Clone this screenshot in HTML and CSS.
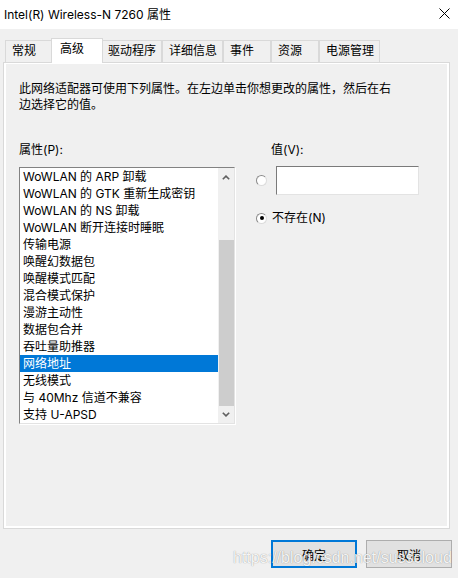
FILE: index.html
```html
<!DOCTYPE html>
<html lang="zh">
<head>
<meta charset="utf-8">
<title>Intel(R) Wireless-N 7260 属性</title>
<link rel="stylesheet" href="styles.css">
</head>
<body>
<div class="window">
  <header class="titlebar">
    <span class="title">Intel(R) Wireless-N 7260 属性</span>
    <svg class="close" width="11" height="11" viewBox="0 0 11 11"><path d="M0.5 0.5 L10.5 10.5 M10.5 0.5 L0.5 10.5" stroke="#000" stroke-width="1" fill="none"/></svg>
  </header>
  <nav class="tabs">
    <div class="tab">常规</div>
    <div class="tab active">高级</div>
    <div class="tab">驱动程序</div>
    <div class="tab">详细信息</div>
    <div class="tab">事件</div>
    <div class="tab">资源</div>
    <div class="tab">电源管理</div>
  </nav>
  <section class="panel">
    <p class="desc">此网络适配器可使用下列属性。在左边单击你想更改的属性，然后在右边选择它的值。</p>
    <div class="columns">
      <div class="col-left">
        <div class="label">属性(P):</div>
        <div class="listbox">
          <ul class="items">
            <li>WoWLAN 的 ARP 卸载</li>
            <li>WoWLAN 的 GTK 重新生成密钥</li>
            <li>WoWLAN 的 NS 卸载</li>
            <li>WoWLAN 断开连接时睡眠</li>
            <li>传输电源</li>
            <li>唤醒幻数据包</li>
            <li>唤醒模式匹配</li>
            <li>混合模式保护</li>
            <li>漫游主动性</li>
            <li>数据包合并</li>
            <li>吞吐量助推器</li>
            <li class="selected">网络地址</li>
            <li>无线模式</li>
            <li>与 40Mhz 信道不兼容</li>
            <li>支持 U-APSD</li>
          </ul>
          <div class="scrollbar">
            <div class="sb-btn sb-up"><svg width="8" height="5" viewBox="0 0 8 5"><path d="M0.8 4.3 L4 1.1 L7.2 4.3" stroke="#606060" stroke-width="1.6" fill="none"/></svg></div>
            <div class="sb-track"><div class="sb-thumb"></div></div>
            <div class="sb-btn sb-down"><svg width="8" height="5" viewBox="0 0 8 5"><path d="M0.8 0.7 L4 3.9 L7.2 0.7" stroke="#606060" stroke-width="1.6" fill="none"/></svg></div>
          </div>
        </div>
      </div>
      <div class="col-right">
        <div class="label value-label">值(V):</div>
        <div class="radio-row row-input">
          <span class="radio"></span>
          <div class="textbox"></div>
        </div>
        <div class="radio-row row-none">
          <span class="radio checked"></span>
          <span class="radio-text">不存在(N)</span>
        </div>
      </div>
    </div>
  </section>
  <div class="buttons">
    <button class="btn default">确定</button>
    <button class="btn">取消</button>
  </div>
  <div class="watermark">https://blog.csdn.net/susscloud</div>
</div>
</body>
</html>
```
FILE: styles.css
```css
* { box-sizing: border-box; }

html, body {
  margin: 0;
  padding: 0;
  background: #f0f0f0;
}

body {
  width: 458px;
  height: 578px;
  overflow: hidden;
  font-family: Inter, "Noto Sans CJK SC", sans-serif;
  font-size: 12px;
  color: #000;
}

.window {
  position: relative;
  width: 458px;
  height: 578px;
}

.titlebar {
  height: 29px;
  background: #fff;
  display: flex;
  align-items: center;
  justify-content: space-between;
  padding: 0 8px 0 4px;
}

.title {
  line-height: 17px;
  margin-top: -1px;
}

.close {
  display: block;
  margin-bottom: 2px;
}

.tabs {
  display: flex;
  align-items: flex-end;
  height: 25px;
  margin-top: 9px;
  margin-bottom: -1px;
  padding-left: 5px;
  position: relative;
  z-index: 1;
}

.tab {
  min-width: 48px;
  height: 22px;
  margin-bottom: 1px;
  padding: 0 5px 0 6px;
  border: 1px solid #d9d9d9;
  border-bottom: none;
  background: #f0f0f0;
  line-height: 20px;
  white-space: nowrap;
}

.tab.active {
  min-width: 52px;
  height: 25px;
  margin: 0 -2px;
  padding: 1px 5px 0 8px;
  background: #fff;
  line-height: 17px;
  position: relative;
}

.panel {
  margin: 0 8px 0 3px;
  height: 467px;
  border: 1px solid #d9d9d9;
  box-shadow: inset 2px 1px 0 #fff, inset -2px -2px 0 #fff;
  padding: 18px 15px 0 15px;
}

.desc {
  margin: 0;
  width: 376px;
  line-height: 16px;
}

.columns {
  display: grid;
  grid-template-columns: 216px auto;
  column-gap: 21px;
  margin-top: 29px;
}

.label {
  line-height: 16px;
}

.value-label {
  margin-left: 15px;
}

.listbox {
  margin-top: 9px;
  width: 216px;
  height: 257px;
  display: flex;
  background: #fff;
  border: 1px solid;
  border-color: #828282 #e3e3e3 #e3e3e3 #828282;
  box-shadow: 1px 1px 0 #fff;
  overflow: hidden;
}

.items {
  list-style: none;
  margin: 0;
  padding: 0;
  flex: 1;
  overflow: hidden;
}

.items li {
  height: 17px;
  line-height: 17px;
  padding-left: 3px;
  white-space: nowrap;
}

.items li.selected {
  background: #0078d7;
  color: #fff;
}

.scrollbar {
  width: 16px;
  background: #f0f0f0;
  display: flex;
  flex-direction: column;
}

.sb-btn {
  display: flex;
  align-items: center;
  justify-content: center;
}

.sb-btn svg { display: block; }

.sb-up { height: 17px; padding-top: 1px; }
.sb-down { height: 16px; padding-bottom: 1px; }

.sb-track {
  flex: 1;
}

.sb-thumb {
  margin: 55px 0 0 1px;
  height: 166px;
  background: #cdcdcd;
}

.radio-row {
  display: flex;
  align-items: center;
}

.row-input {
  margin-top: 8px;
  height: 29px;
}

.row-none {
  margin-top: 15px;
  height: 16px;
}

.radio {
  position: relative;
  width: 11px;
  height: 11px;
  flex: none;
  border-radius: 50%;
  background: #fff;
  border: 1px solid;
  border-color: #8a8a8a #dcdcdc #dcdcdc #8a8a8a;
}

.radio.checked::after {
  content: "";
  position: absolute;
  left: 2.5px;
  top: 2.5px;
  width: 4px;
  height: 4px;
  border-radius: 50%;
  background: #000;
}

.textbox {
  margin-left: 9px;
  width: 143px;
  height: 29px;
  background: #fff;
  border: 1px solid;
  border-color: #7a7a7a #e3e3e3 #e3e3e3 #7a7a7a;
}

.radio-text {
  margin-left: 5px;
  line-height: 16px;
}

.buttons {
  display: flex;
  justify-content: flex-end;
  gap: 9px;
  margin-top: 11px;
  padding-right: 6px;
}

.btn {
  width: 86px;
  height: 28px;
  background: #e1e1e1;
  border: 1px solid #adadad;
  font: inherit;
  color: #000;
  padding: 0;
}

.btn.default {
  border: 2px solid #0078d7;
}

.watermark {
  position: absolute;
  left: 233px;
  top: 549px;
  font-family: "Liberation Sans", sans-serif;
  font-size: 16px;
  color: rgba(255, 255, 255, 0.92);
  text-shadow: 0 0 1px rgba(0, 0, 0, 0.45);
  white-space: nowrap;
  pointer-events: none;
}
```
